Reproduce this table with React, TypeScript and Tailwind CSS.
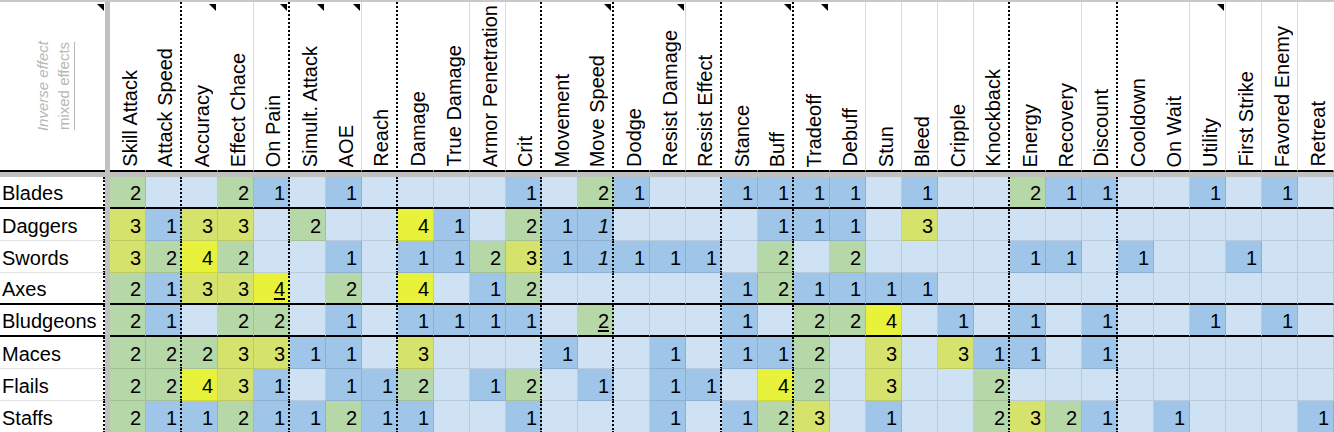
import clsx from "clsx";

type Divider = "none" | "line" | "dot";

type Column = {
  name: string;
  head: Divider;
  note?: boolean;
};

const COLUMNS: Column[] = [
  { name: "Skill Attack", head: "none" },
  { name: "Attack Speed", head: "dot" },
  { name: "Accuracy", head: "none", note: true },
  { name: "Effect Chace", head: "line" },
  { name: "On Pain", head: "dot", note: true },
  { name: "Simult. Attack", head: "none", note: true },
  { name: "AOE", head: "line", note: true },
  { name: "Reach", head: "dot" },
  { name: "Damage", head: "none" },
  { name: "True Damage", head: "line" },
  { name: "Armor Penetration", head: "line" },
  { name: "Crit", head: "dot" },
  { name: "Movement", head: "none" },
  { name: "Move Speed", head: "dot", note: true },
  { name: "Dodge", head: "none" },
  { name: "Resist Damage", head: "line", note: true },
  { name: "Resist Effect", head: "dot" },
  { name: "Stance", head: "none" },
  { name: "Buff", head: "dot", note: true },
  { name: "Tradeoff", head: "none", note: true },
  { name: "Debuff", head: "line" },
  { name: "Stun", head: "line" },
  { name: "Bleed", head: "line" },
  { name: "Cripple", head: "line" },
  { name: "Knockback", head: "dot" },
  { name: "Energy", head: "none" },
  { name: "Recovery", head: "line" },
  { name: "Discount", head: "dot" },
  { name: "Cooldown", head: "none" },
  { name: "On Wait", head: "line" },
  { name: "Utility", head: "line", note: true },
  { name: "First Strike", head: "line" },
  { name: "Favored Enemy", head: "line" },
  { name: "Retreat", head: "none" },
];

type Row = {
  label: string;
  values: string;
  thick?: boolean;
  italic?: number[];
  underline?: number[];
};

// one char per column, "." = empty
const ROWS: Row[] = [
  { label: "Blades", values: "2..21.1..." + ".1.21..111" + "1.1..211.." + "1.1.", thick: true },
  { label: "Daggers", values: "3133.2..41" + ".211....11" + "1.3......." + "....", italic: [13] },
  { label: "Swords", values: "3242..1.11" + "2311111.2." + "2....11.1." + ".1..", italic: [13] },
  { label: "Axes", values: "21334.2.4." + "12.....121" + "111......." + "....", thick: true, underline: [4] },
  { label: "Bludgeons", values: "21.22.1.11" + "11.2...1.2" + "24.1.1.1.." + "1.1.", thick: true, underline: [13] },
  { label: "Maces", values: "2223311.3." + "..1..1.112" + ".3.311.1.." + "...." },
  { label: "Flails", values: "22431.112." + "12.1.11.42" + ".3..2....." + "...." },
  { label: "Staffs", values: "211211211." + ".1...1.123" + ".1..2321.1" + "...1" },
];

const FILL: Record<string, string> = {
  ".": "bg-[#cfe2f3]",
  "1": "bg-[#9fc5e8]",
  "2": "bg-[#b6d7a8]",
  "3": "bg-[#d5e36d]",
  "4": "bg-[#e9f23b]",
};

const DOTTED_RIGHT = "border-r-2 border-r-black [border-right-style:dotted]";

function NoteMark() {
  return (
    <svg className="absolute right-[1px] top-[2px]" width="7" height="7" viewBox="0 0 7 7">
      <polygon points="0,0 7,0 7,7" fill="#000" />
    </svg>
  );
}

function HeaderCell({ column }: { column: Column }) {
  return (
    <div
      className={clsx(
        "relative flex h-full w-[36px] shrink-0 items-end justify-center border-b-2 border-b-black pb-[3px] pl-1",
        column.head === "dot" && DOTTED_RIGHT,
        column.head === "line" && "border-r border-r-[#dadada]",
        column.head === "none" && "border-r border-r-transparent"
      )}
    >
      <span className="rotate-180 whitespace-nowrap text-[20px] leading-[22px] [writing-mode:vertical-rl]">
        {column.name}
      </span>
      {column.note ? <NoteMark /> : null}
    </div>
  );
}

function DataCell({ value, index, row }: { value: string; index: number; row: Row }) {
  const dotted = COLUMNS[index].head === "dot";
  return (
    <div
      className={clsx(
        "flex h-full w-[36px] shrink-0 items-center justify-end pt-[2px] text-[20px] leading-none",
        FILL[value],
        dotted ? `${DOTTED_RIGHT} pr-[3px]` : "border-r border-r-black/10 pr-[4px]",
        row.thick ? "border-b-2 border-b-black" : "border-b border-b-black/10",
        row.italic?.includes(index) && "italic",
        row.underline?.includes(index) && "underline underline-offset-2"
      )}
    >
      {value === "." ? "" : value}
    </div>
  );
}

export default function App() {
  return (
    <div className="h-[432px] w-[1334px] overflow-hidden bg-white font-['Liberation_Sans',Arial,sans-serif] text-black">
      <div className="flex h-[172px] border-t-2 border-t-[#c8c8c8]">
        <div className="relative flex h-full w-[105px] shrink-0 items-center justify-center border-b-2 border-b-black">
          <div className="rotate-180 text-center text-[15px] leading-[21px] text-[#b7b7b7] [writing-mode:vertical-rl]">
            <div className="italic">Inverse effect</div>
            <div className="underline underline-offset-2">mixed effects</div>
          </div>
          <NoteMark />
        </div>
        <div className="h-full w-[5px] shrink-0 bg-[#c0c0c0]" />
        {COLUMNS.map((column) => (
          <HeaderCell key={column.name} column={column} />
        ))}
      </div>

      <div className="h-[5px] bg-[#c0c0c0]" />

      {ROWS.map((row) => (
        <div key={row.label} className="flex h-[32px]">
          <div
            className={clsx(
              "flex h-full w-[105px] shrink-0 items-center bg-white pl-[2px] pt-[2px] text-[20px]",
              DOTTED_RIGHT,
              row.thick ? "border-b-2 border-b-black" : "border-b border-b-[#e2e2e2]"
            )}
          >
            {row.label}
          </div>
          <div className="h-full w-[5px] shrink-0 bg-[#c0c0c0]" />
          {row.values.split("").map((value, index) => (
            <DataCell key={index} value={value} index={index} row={row} />
          ))}
        </div>
      ))}
    </div>
  );
}
